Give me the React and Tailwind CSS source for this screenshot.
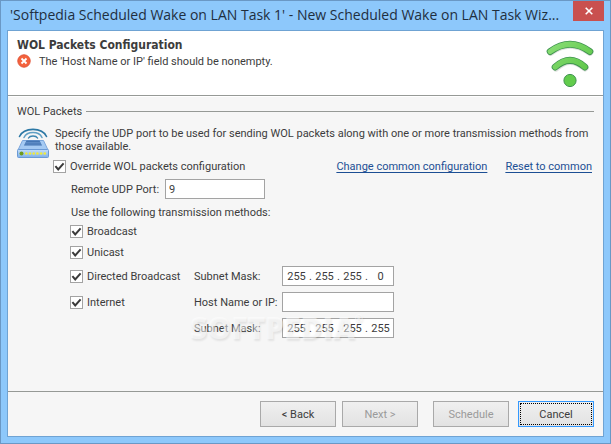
import { useId } from "react";

function CheckBox({ label }) {
  return (
    <label className="flex items-center gap-1 whitespace-nowrap">
      <span className="grid h-[13px] w-[13px] shrink-0">
        <input
          type="checkbox"
          defaultChecked
          className="peer col-start-1 row-start-1 h-[13px] w-[13px] appearance-none border border-[#a3a3a3] bg-white"
        />
        <svg
          viewBox="0 0 13 13"
          className="pointer-events-none invisible col-start-1 row-start-1 h-[13px] w-[13px] peer-checked:visible"
          aria-hidden="true"
        >
          <path d="M2.4 6.2 L5.2 9.4 L10.6 3.4" fill="none" stroke="#3a3a3a" strokeWidth="2" />
        </svg>
      </span>
      <span>{label}</span>
    </label>
  );
}

function IpField({ label, octets }) {
  return (
    <div role="group" aria-label={label} className="flex h-5 w-[112px] items-center border border-[#a3a3a3] bg-white pl-px">
      {octets.map((octet, i) => (
        <span key={i} className="flex w-7 items-center last:w-[26px]">
          <input
            aria-label={`${label} octet ${i + 1}`}
            defaultValue={octet}
            maxLength={3}
            className="w-[25px] bg-transparent text-center outline-none"
          />
          {i < octets.length - 1 && <span className="w-[3px]">.</span>}
        </span>
      ))}
    </div>
  );
}

function WifiLogo() {
  return (
    <svg viewBox="0 0 50 50" className="h-[50px] w-[50px] shrink-0" aria-hidden="true">
      <defs>
        <linearGradient id="wifi" x1="0" y1="0" x2="50" y2="50" gradientUnits="userSpaceOnUse">
          <stop offset="0" stopColor="#8fe07c" />
          <stop offset="1" stopColor="#4fbf3a" />
        </linearGradient>
      </defs>
      <g fill="none" strokeLinecap="round">
        <g stroke="#c9cfc7" opacity="0.6">
          <path d="M5.8 14.3 Q25 0 45 14.3" strokeWidth="7" />
          <path d="M11 30 Q25 16.4 40 30" strokeWidth="7" />
        </g>
        <g stroke="#3f9350">
          <path d="M5.2 13.5 Q25 -1 44.8 13.5" strokeWidth="7" />
          <path d="M10.2 29 Q25 15.6 39.8 29" strokeWidth="7" />
        </g>
        <g stroke="url(#wifi)">
          <path d="M5.2 13.5 Q25 -1 44.8 13.5" strokeWidth="5.2" />
          <path d="M10.2 29 Q25 15.6 39.8 29" strokeWidth="5.2" />
        </g>
      </g>
      <circle cx="25" cy="42.5" r="6.1" fill="#62cc4c" stroke="#3f9350" />
    </svg>
  );
}

function RouterIcon() {
  return (
    <svg viewBox="0 0 32 32" className="h-8 w-8 shrink-0" aria-hidden="true">
      <defs>
        <linearGradient id="router" x1="0" y1="0" x2="0" y2="1">
          <stop offset="0" stopColor="#c3defa" />
          <stop offset="1" stopColor="#7fb0e8" />
        </linearGradient>
      </defs>
      <g fill="none" strokeLinecap="round">
        <path d="M2.5 10.5 C7 1 25 1 29.5 10.5" stroke="#2c78a5" strokeWidth="1.6" />
        <path d="M7 11.5 C10 4.8 22 4.8 25 11.5" stroke="#5f9fc4" strokeWidth="1.5" />
        <path d="M11.5 12 C13 9.4 19 9.4 20.5 12" stroke="#3c85b0" strokeWidth="1.5" />
      </g>
      <path d="M5.5 14.5 H26.5 L31 24 H1 Z" fill="#a5caf3" stroke="#7ba6dc" />
      <path d="M9.5 14.5 H22.5 L25 19.5 H7 Z" fill="#3f6fae" />
      <path d="M9 16.3 H23 M8 18 H24" stroke="#6f9cd3" strokeWidth="0.8" />
      <rect x="0.5" y="23.5" width="31" height="8" rx="1" fill="url(#router)" stroke="#6a9ad6" />
      <circle cx="4.5" cy="27.5" r="2" fill="#6f9a1c" />
      <g fill="#f0ea3a">
        <circle cx="9.3" cy="27.5" r="1.3" />
        <circle cx="13" cy="27.5" r="1.3" />
        <circle cx="16.7" cy="27.5" r="1.3" />
        <circle cx="20.4" cy="27.5" r="1.3" />
        <circle cx="24.1" cy="27.5" r="1.3" />
        <circle cx="27.8" cy="27.5" r="1.3" />
      </g>
    </svg>
  );
}

const buttonBase =
  "h-[26px] w-[76px] border border-[#a9a9a9] bg-linear-to-b from-[#f0f0f0] to-[#e2e2e2] disabled:text-[#9a9a9a]";

export default function App() {
  const port = useId();
  const host = useId();
  return (
    <div className="flex min-h-screen flex-col border border-[#6a98c5] bg-[#8dc8fb] px-[6px] pb-[6px] font-['Roboto',sans-serif] text-[11px] leading-[13px] text-[#3c3c3c]">
      <header className="flex h-[29px] items-start justify-between pl-[3px]">
        <h1 className="min-w-0 truncate font-['Open_Sans',sans-serif] text-[14px] leading-7 text-[#1f2f3f]">
          'Softpedia Scheduled Wake on LAN Task 1' - New Scheduled Wake on LAN Task Wiz...
        </h1>
        <button aria-label="Close" className="flex h-5 w-[31px] shrink-0 items-center justify-center bg-[#c9504f]">
          <svg viewBox="0 0 8 8" className="h-2 w-2" aria-hidden="true">
            <path d="M0.7 0.7 L7.3 7.3 M7.3 0.7 L0.7 7.3" stroke="#fff" strokeWidth="1.6" />
          </svg>
        </button>
      </header>

      <main className="flex flex-1 flex-col border border-[#6fa3d3] bg-[#f6f6f6]">
        <section className="flex h-[65px] items-start justify-between border-b border-[#969996] bg-white pt-[7px] pr-2 pl-[9px]">
          <div>
            <h2 className="font-['DejaVu_Sans_Condensed','DejaVu_Sans',sans-serif] text-[12px] leading-[15px] font-bold [font-stretch:condensed]">
              WOL Packets Configuration
            </h2>
            <p className="flex items-center gap-2 pt-px">
              <svg viewBox="0 0 14 14" className="h-[14px] w-[14px]" aria-hidden="true">
                <circle cx="7" cy="7" r="6.2" fill="#f4623c" stroke="#e2553a" />
                <path d="M4.5 4.5 L9.5 9.5 M9.5 4.5 L4.5 9.5" stroke="#fff" strokeWidth="1.8" />
              </svg>
              The 'Host Name or IP' field should be nonempty.
            </p>
          </div>
          <WifiLogo />
        </section>

        <section className="relative flex-1 border-t border-white px-[9px] pt-2">
          <h3 className="flex items-center gap-1">
            WOL Packets
            <span className="h-px flex-1 bg-[#969996]" />
          </h3>
          <div className="flex gap-[6px] pt-2">
            <RouterIcon />
            <p className="pt-px">
              Specify the UDP port to be used for sending WOL packets along with one or more transmission methods from
              those available.
            </p>
          </div>
          <div className="flex items-center justify-between pt-[2px] pr-[2px] pl-9">
            <CheckBox label="Override WOL packets configuration" />
            <nav className="flex gap-[18px] text-[#1c4f94]">
              <a href="#common" className="underline underline-offset-2">Change common configuration</a>
              <a href="#reset" className="underline underline-offset-2">Reset to common</a>
            </nav>
          </div>
          <div className="flex items-center gap-[6px] pt-[6px] pl-[54px]">
            <label htmlFor={port} className="w-[88px] whitespace-nowrap">Remote UDP Port:</label>
            <input id={port} defaultValue="9" className="h-5 w-[100px] border border-[#a3a3a3] bg-white px-[3px]" />
          </div>
          <p className="pt-[7px] pl-[54px]">Use the following transmission methods:</p>
          <div className="flex flex-col gap-2 pt-[6px] pl-[53px]">
            <CheckBox label="Broadcast" />
            <CheckBox label="Unicast" />
          </div>
          <div className="grid grid-cols-[124px_88px_112px] items-center gap-y-[6px] pt-[7px] pl-[53px]">
            <CheckBox label="Directed Broadcast" />
            <span>Subnet Mask:</span>
            <IpField label="Directed broadcast subnet mask" octets={["255", "255", "255", "0"]} />
            <CheckBox label="Internet" />
            <label htmlFor={host} className="whitespace-nowrap">Host Name or IP:</label>
            <input id={host} className="h-5 border border-[#a3a3a3] bg-white px-[3px]" />
            <span className="col-start-2">Subnet Mask:</span>
            <IpField label="Internet subnet mask" octets={["255", "255", "255", "255"]} />
          </div>
          <div className="pointer-events-none absolute top-[215px] left-[182px] flex font-['Open_Sans',sans-serif] text-[30px] leading-8 font-extrabold text-white/50 [text-shadow:1px_2px_2px_rgb(0_0_0/0.08)]">
            SOFTPEDIA<span className="text-[10px] leading-3">®</span>
          </div>
        </section>

        <footer className="flex justify-end border-t border-[#969996] px-[9px] py-[9px]">
          <button className={`${buttonBase} mr-[6px]`}>&lt; Back</button>
          <button disabled className={`${buttonBase} mr-[15px]`}>Next &gt;</button>
          <button disabled className={`${buttonBase} mr-[9px]`}>Schedule</button>
          <button className="h-[26px] w-[76px] border border-[#3399ff] bg-linear-to-b from-[#f0f0f0] to-[#e2e2e2] p-px">
            <span className="flex h-full items-center justify-center border border-dotted border-black">Cancel</span>
          </button>
        </footer>
      </main>
    </div>
  );
}
